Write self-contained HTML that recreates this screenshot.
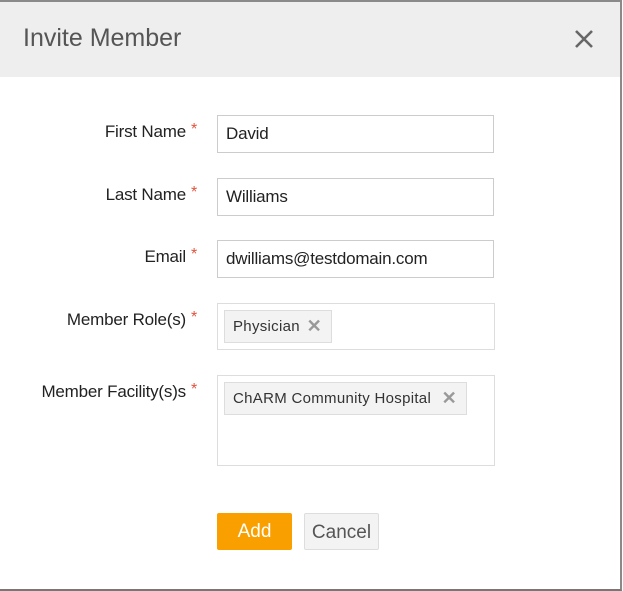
<!DOCTYPE html>
<html><head><style>
body{margin:0;width:623px;height:591px;background:#fff;font-family:"Liberation Sans",sans-serif;position:relative;overflow:hidden}
.frame{position:absolute;left:0;top:0;width:620px;height:587px;border-top:2px solid #8a8a8a;border-right:2px solid #8a8a8a;border-bottom:2px solid #777}
.hdr{position:absolute;left:0;top:2px;width:620px;height:75px;background:#eeeeee}
.title{position:absolute;left:23px;top:24px;font-size:25px;color:#555;font-weight:300}
.x{position:absolute;left:573px;top:28px}
.lbl{position:absolute;right:426px;font-size:17px;color:#222;text-align:right;white-space:nowrap;letter-spacing:-.2px}
.lbl b{color:#e0543e;font-weight:normal;font-size:16px;vertical-align:top;margin-left:5px;position:relative;top:-1px}
.inp{position:absolute;left:217px;font-size:17px;color:#222;line-height:36px;padding-left:8px;box-sizing:border-box;width:277px;height:38px;border:1px solid #ccc;letter-spacing:-.2px}
.box{position:absolute;left:217px;width:278px;border:1px solid #ddd;box-sizing:border-box}
.tag{position:absolute;left:6px;top:6px;height:33px;background:#f3f3f3;border:1px solid #ddd;box-sizing:border-box;font-size:15px;color:#333;line-height:31px;padding-left:8px;letter-spacing:.3px}
.tag span{color:#999;font-weight:bold;font-size:18px;position:absolute;right:9px;top:0}
.btn{position:absolute;top:513px;height:37px;border-radius:2px;font-size:19px;text-align:center;line-height:37px;box-sizing:border-box}
</style></head><body>
<div class="frame"></div>
<div class="hdr"></div>
<div class="title">Invite Member</div>
<svg class="x" width="22" height="22" viewBox="0 0 22 22"><path d="M3 3L19 19M19 3L3 19" stroke="#666" stroke-width="2.6"/></svg>
<div class="lbl" style="top:122px">First Name<b>*</b></div>
<div class="inp" style="top:115px">David</div>
<div class="lbl" style="top:185px">Last Name<b>*</b></div>
<div class="inp" style="top:178px">Williams</div>
<div class="lbl" style="top:247px">Email<b>*</b></div>
<div class="inp" style="top:240px">dwilliams@testdomain.com</div>
<div class="lbl" style="top:310px">Member Role(s)<b>*</b></div>
<div class="box" style="top:303px;height:47px"><div class="tag" style="width:108px">Physician<span>✕</span></div></div>
<div class="lbl" style="top:382px">Member Facility(s)s<b>*</b></div>
<div class="box" style="top:375px;height:91px"><div class="tag" style="width:243px">ChARM Community Hospital<span>✕</span></div></div>
<div class="btn" style="left:217px;width:75px;background:#f9a000;color:#fff">Add</div>
<div class="btn" style="left:304px;width:75px;background:#f3f3f3;border:1px solid #ddd;color:#555">Cancel</div>
</body></html>
